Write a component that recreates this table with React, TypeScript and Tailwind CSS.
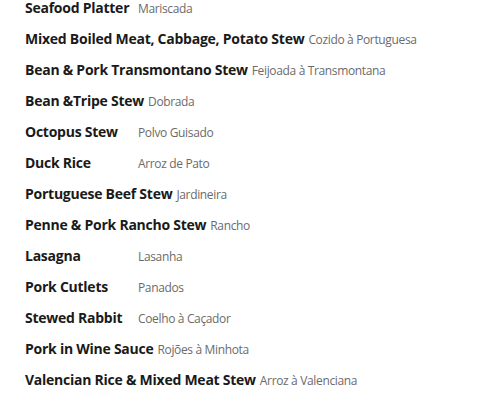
const dishes = [
  { name: 'Seafood Platter', pt: 'Mariscada' },
  { name: 'Mixed Boiled Meat, Cabbage, Potato Stew', pt: 'Cozido à Portuguesa' },
  { name: 'Bean & Pork Transmontano Stew', pt: 'Feijoada à Transmontana' },
  { name: 'Bean &Tripe Stew', pt: 'Dobrada' },
  { name: 'Octopus Stew', pt: 'Polvo Guisado' },
  { name: 'Duck Rice', pt: 'Arroz de Pato' },
  { name: 'Portuguese Beef Stew', pt: 'Jardineira' },
  { name: 'Penne & Pork Rancho Stew', pt: 'Rancho' },
  { name: 'Lasagna', pt: 'Lasanha' },
  { name: 'Pork Cutlets', pt: 'Panados' },
  { name: 'Stewed Rabbit', pt: 'Coelho à Caçador' },
  { name: 'Pork in Wine Sauce', pt: 'Rojões à Minhota' },
  { name: 'Valencian Rice & Mixed Meat Stew', pt: 'Arroz à Valenciana' },
];

export default function App() {
  return (
    <div className="w-[492px] h-[405px] overflow-hidden bg-white">
      <ul className="-mt-[8px] pl-[25px]">
        {dishes.map((d) => (
          <li key={d.name} className="h-[31px] leading-[31px] flex items-baseline whitespace-nowrap">
            <span className="inline-block min-w-[113px] pr-[4px] font-['Open_Sans',sans-serif] text-[14px] font-bold text-[#1a1a1a] tracking-[-0.25px]">
              {d.name}
            </span>
            <span className="font-['Open_Sans',sans-serif] text-[12px] tracking-[-0.35px] text-[#6b6b6b]">{d.pt}</span>
          </li>
        ))}
      </ul>
    </div>
  );
}
